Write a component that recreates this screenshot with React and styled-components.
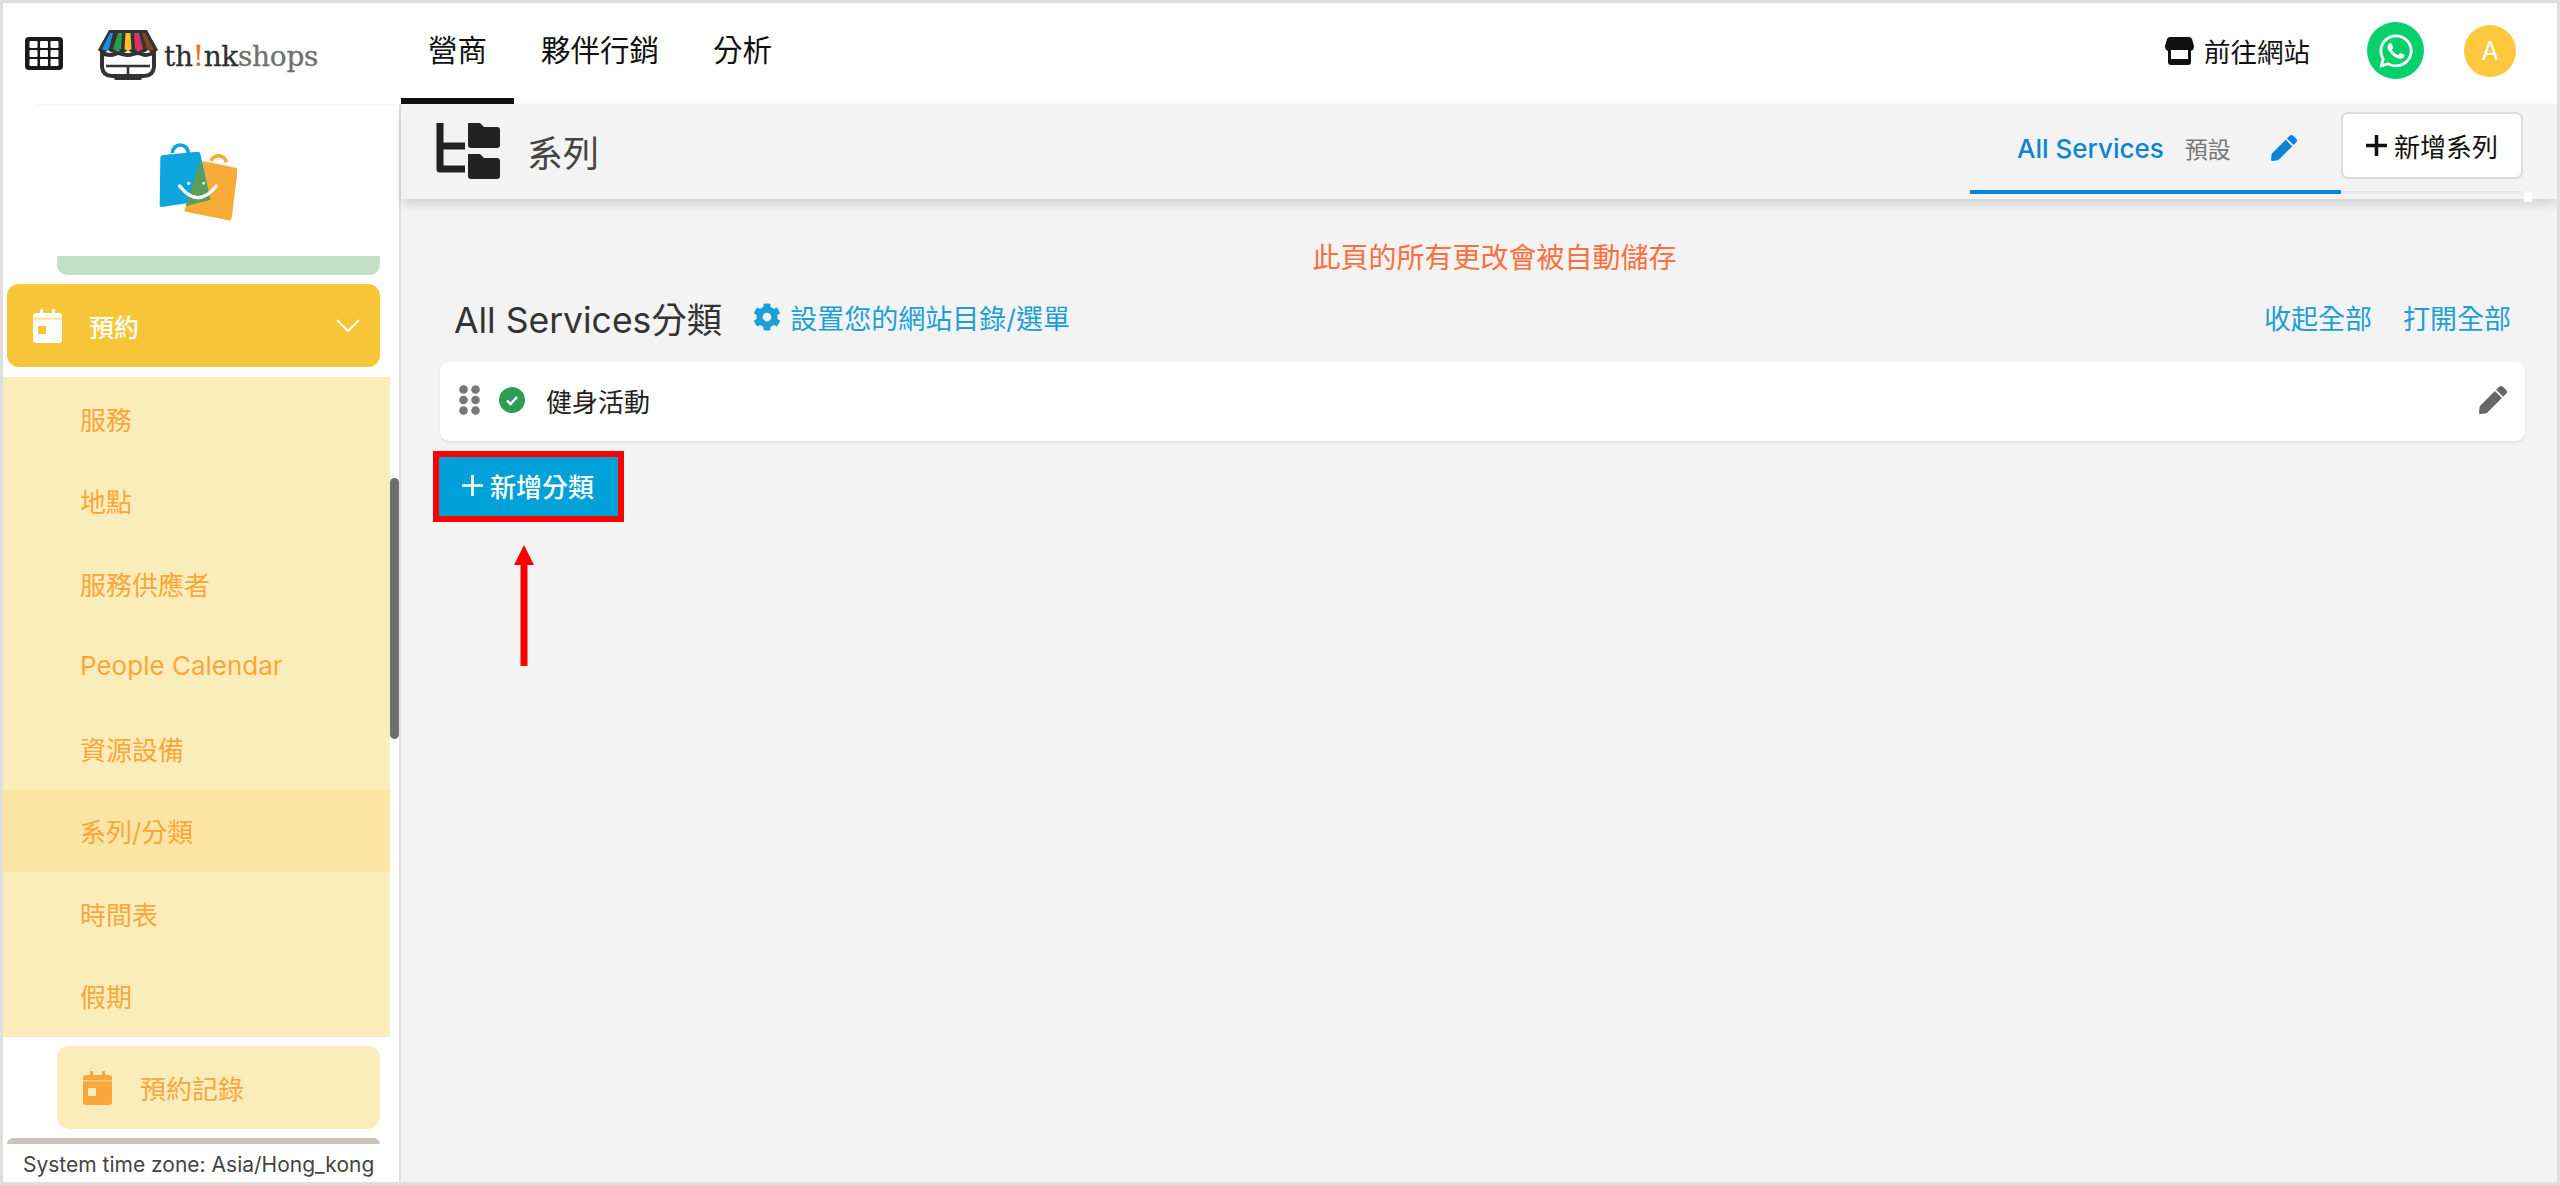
import React from 'react';
import styled, { createGlobalStyle } from 'styled-components';
import { FaCog, FaPen, FaWhatsapp } from 'react-icons/fa';

const FONT = 'Inter, "Noto Sans CJK TC", sans-serif';

const GlobalStyle = createGlobalStyle`
  html, body { margin: 0; padding: 0; background: #fff; }
  * { box-sizing: border-box; }
  body { font-family: ${FONT}; }
`;

const Frame = styled.div`
  width: 2560px;
  height: 1185px;
  border: 3px solid #dedede;
  display: flex;
  flex-direction: column;
  overflow: hidden;
  background: #fff;
`;

/* ---------- top bar ---------- */
const TopBar = styled.header`
  flex: 0 0 101px;
  display: flex;
  align-items: stretch;
  background: #fff;
  padding-left: 22px;
`;

const Brand = styled.div`
  width: 376px;
  display: flex;
  align-items: center;
  gap: 34px;
`;

const BrandMark = styled.div`
  display: flex;
  align-items: center;
`;

const LogoText = styled.span`
  font-family: "DejaVu Serif", serif;
  font-size: 28px;
  letter-spacing: -0.3px;
  color: #6f6f6f;
  margin: 6px 0 0 5px;
  -webkit-text-stroke: 0.3px currentColor;
  b { font-weight: 400; color: #2e2e2e; }
  i { font-style: normal; color: #f26b2a; }
`;

const NavTab = styled.a`
  padding: 0 27px;
  font-size: 29.5px;
  line-height: 1;
  color: #111;
  display: flex;
  align-items: center;
  border-bottom: 6px solid ${p => (p.$active ? '#111' : 'transparent')};
`;

const TopRight = styled.div`
  margin-left: auto;
  display: flex;
  align-items: center;
  padding-right: 41px;
  padding-bottom: 6px;
`;

const SiteLink = styled.a`
  display: flex;
  align-items: center;
  gap: 10px;
  font-size: 26.5px;
  color: #111;
`;

const WhatsApp = styled.span`
  width: 57px;
  height: 57px;
  border-radius: 50%;
  background: #06d06b;
  color: #fff;
  font-size: 38px;
  display: flex;
  align-items: center;
  justify-content: center;
  margin-left: 57px;
`;

const Avatar = styled.span`
  width: 52px;
  height: 52px;
  border-radius: 50%;
  background: #ffc83d;
  color: #fff;
  font-size: 25px;
  display: flex;
  align-items: center;
  justify-content: center;
  margin-left: 40px;
`;

/* ---------- body ---------- */
const Body = styled.div`
  flex: 1;
  display: flex;
  min-height: 0;
`;

const Sidebar = styled.aside`
  position: relative;
  width: 398px;
  flex: none;
  border-right: 2px solid #e0e0e0;
  display: flex;
  flex-direction: column;
  background: #fff;
  overflow: hidden;
`;

const BagBlock = styled.div`
  height: 152px;
  margin-left: 32px;
  border-top: 1px solid #f2f6f4;
  display: flex;
  justify-content: center;
  padding: 36px 40px 0 0;
`;

const GreenStub = styled.div`
  height: 19px;
  margin: 0 19px 0 54px;
  background: #c2dfc8;
  border-radius: 0 0 10px 10px;
`;

const ParentItem = styled.div`
  height: 83px;
  margin: 9px 19px 10px 4px;
  background: #f7c638;
  border-radius: 12px;
  display: flex;
  align-items: center;
  padding: 0 20px 0 26px;
  color: #fff;
  font-size: 25px;
  font-weight: 500;
  span { margin-left: 27px; flex: 1; }
`;

const SubMenu = styled.ul`
  list-style: none;
  margin: 0;
  padding: 0;
  width: 387px;
  background: #fbedb9;
`;

const SubItem = styled.li`
  height: 82.5px;
  display: flex;
  align-items: center;
  padding-left: 77px;
  font-size: 26px;
  color: #fba63a;
  background: ${p => (p.$active ? '#fce5a3' : 'transparent')};
`;

const RecordCard = styled.div`
  height: 83px;
  margin: 9px 19px 9px 54px;
  background: #fbedb9;
  border-radius: 12px;
  display: flex;
  align-items: center;
  padding-left: 26px;
  font-size: 26px;
  color: #fba63a;
  span { margin-left: 28px; }
`;

const BrownStub = styled.div`
  height: 6px;
  margin: 0 19px 0 4px;
  background: #cfc0b8;
  border-radius: 10px 10px 0 0;
  flex: none;
`;

const TimeZone = styled.div`
  padding: 8px 0 0 20px;
  font-size: 21px;
  line-height: 26px;
  color: #444;
  white-space: nowrap;
`;

const ScrollThumb = styled.div`
  position: absolute;
  left: 387px;
  top: 374px;
  width: 9px;
  height: 261px;
  border-radius: 5px;
  background: #6e6e6e;
`;

/* ---------- main ---------- */
const Main = styled.main`
  position: relative;
  flex: 1;
  background: #f3f3f3;
  display: flex;
  flex-direction: column;
`;

const SubHeader = styled.div`
  position: relative;
  height: 95px;
  flex: none;
  display: flex;
  padding: 0 34px 0 35px;
  background: #f3f3f3;
  box-shadow: 0 6px 10px rgba(0, 0, 0, 0.12);
`;

const PageTitle = styled.div`
  display: flex;
  align-items: center;
  gap: 27px;
  font-size: 36px;
  color: #444;
  height: 95px;
  padding-bottom: 2px;
`;

const TabRail = styled.div`
  margin-left: auto;
  height: 90px;
  display: flex;
  border-bottom: 3px solid #e8eaea;
`;

const SeriesTab = styled.div`
  width: 371px;
  height: 90px;
  margin-bottom: -3px;
  padding: 2px 0 0 47px;
  border-bottom: 4px solid #0d84d0;
  display: flex;
  align-items: center;
  color: #0d84d0;
  font-size: 26px;
  font-weight: 500;
  small { font-size: 23px; font-weight: 400; color: #777; margin: 0 40px 0 21px; }
`;

const OutlineButton = styled.button`
  align-self: flex-start;
  margin-top: 8px;
  width: 182px;
  height: 67px;
  border: 2px solid #ddd;
  border-radius: 7px;
  background: #fff;
  font: 26px ${FONT};
  color: #111;
  display: flex;
  align-items: center;
  justify-content: center;
  gap: 7px;
  padding: 0;
`;

const RailEnd = styled.div`
  position: absolute;
  right: 25px;
  top: 89px;
  width: 8px;
  height: 9px;
  background: #fff;
`;

const Content = styled.div`
  padding: 41px 32px 0 39px;
`;

const Notice = styled.div`
  text-align: center;
  font-size: 28px;
  line-height: 36px;
  color: #ff6f3c;
  padding-left: 24px;
`;

const HeadingRow = styled.div`
  display: flex;
  align-items: center;
  height: 44px;
  margin-top: 19px;
  margin-bottom: 4px;
  padding: 0 14px 0 14px;
`;

const Heading = styled.h2`
  margin: 0 31px 0 0;
  font-size: 35.5px;
  font-weight: 400;
  color: #333;
`;

const LinkText = styled.a`
  display: flex;
  align-items: center;
  gap: 9px;
  font-size: 27px;
  color: #1a9fd8;
  margin-left: ${p => p.$gap || 0}px;
`;

const Spacer = styled.div`
  flex: 1;
`;

const CategoryCard = styled.div`
  height: 79px;
  margin-top: 23px;
  background: #fff;
  border-radius: 9px;
  box-shadow: 0 2px 2px rgba(120, 150, 150, 0.18);
  display: flex;
  align-items: center;
  gap: 19px;
  padding: 0 18px 3px 19px;
  font-size: 26px;
  color: #222;
  span { margin-left: 2px; flex: 1; }
`;

const AddButton = styled.button`
  display: flex;
  align-items: center;
  gap: 7px;
  width: 191px;
  height: 71px;
  margin: 10px 0 0 -7px;
  padding: 0 0 3px 23px;
  border: 6px solid #f00;
  background: #00a0d9;
  color: #fff;
  font: 500 26px ${FONT};
`;

const Arrow = styled.svg`
  position: absolute;
  left: 113px;
  top: 441px;
`;

/* ---------- drawings ---------- */
const GridIcon = () => (
  <svg width="38" height="33" viewBox="0 0 38 33">
    <rect width="38" height="33" rx="4" fill="#1a1a1a" />
    {[0, 1, 2].flatMap(r =>
      [0, 1, 2].map(c => <rect key={`${r}${c}`} x={4.5 + c * 10.5} y={4 + r * 9} width="8" height="7" rx="1" fill="#fff" />)
    )}
  </svg>
);

const ShopLogo = () => (
  <svg width="62" height="52" viewBox="0 0 62 52">
    <path d="M5 24c0 0 3 3 8 3s6-2 8-2 6 2 10 2 7-2 10-2 4 2 8 2 8-3 8-3v15q-1 9-10 9H15q-9 0-10-9z" fill="#fff" stroke="#333" strokeWidth="4" />
    <path d="M9 38h44M31 39v8" stroke="#333" strokeWidth="2.5" fill="none" />
    <path d="M19 50h24" stroke="#333" strokeWidth="4" strokeLinecap="round" />
    <path d="M12 2h38l11 20q-5 5-10 0q-5 5-10 0q-5 5-10 0q-5 5-10 0q-5 5-10 0q-5 5-10 0z" fill="#333" />
    <path d="M13 5h3l-4 16q-3 3-7 0z" fill="#1b8fe0" />
    <path d="M21 5h4l-1 16q-4 3-8 0z" fill="#27a04b" />
    <path d="M28.5 5h5l1 16q-4 3-7 0z" fill="#f5c024" />
    <path d="M37 5h5l4 16q-4 3-8 0z" fill="#d5336a" />
    <path d="M45 5h3l9 16q-4 3-7 0z" fill="#7a4a1f" />
  </svg>
);

const BagLogo = () => (
  <svg width="80" height="80" viewBox="0 0 240 240">
    <path d="M46 36a24 24 0 0 1 48 0" fill="none" stroke="#0ea5df" strokeWidth="11" />
    <path d="M162 60a24 24 0 0 1 46 4" fill="none" stroke="#f8ab37" strokeWidth="11" />
    <path d="M138 60L236 80Q243 82 242 88L224 232Q222 240 214 238L86 212Q80 210 84 203z" fill="#f8ab37" />
    <path d="M18 42L122 32Q128 32 130 38L160 176L14 198Q8 198 8 192L10 50Q10 43 18 42z" fill="#0ea5df" />
    <path d="M130 58L160 176L86 196z" fill="#5c9e57" />
    <path d="M68 135Q122 205 178 135" fill="none" stroke="#fff" strokeWidth="10" strokeLinecap="round" />
    <circle cx="95" cy="127" r="5" fill="#fff" />
    <circle cx="140" cy="127" r="4" fill="#fff" />
  </svg>
);

const CalendarIcon = ({ color, hole }) => (
  <svg width="29" height="34" viewBox="0 0 29 34">
    <path d="M7 0h3v4h9V0h3v4h4q3 0 3 3v24q0 3-3 3H3q-3 0-3-3V7q0-3 3-3h4z" fill={color} />
    <rect x="0" y="9" width="29" height="1.5" fill={hole} opacity="0.6" />
    <rect x="5" y="17" width="8" height="8" fill={hole} />
  </svg>
);

const Chevron = () => (
  <svg width="24" height="13" viewBox="0 0 24 13">
    <path d="M1 1l11 11L23 1" fill="none" stroke="#fff" strokeWidth="2" />
  </svg>
);

const StoreIcon = () => (
  <svg width="29" height="28" viewBox="0 0 29 28">
    <path d="M5 0h19q2 0 3 2l2 7q0 4-3 5v11q0 3-3 3H6q-3 0-3-3V14q-3-1-3-5l2-7q1-2 3-2z" fill="#111" />
    <rect x="6" y="13" width="17" height="9" fill="#fff" />
  </svg>
);

const FolderTreeIcon = () => (
  <svg width="64" height="56" viewBox="0 0 64 56">
    <path d="M4 0v46h25M4 23h25" fill="none" stroke="#222" strokeWidth="7" strokeLinejoin="round" />
    <path d="M32 0h12l4 4h13q3 0 3 3v15q0 3-3 3H35q-3 0-3-3z" fill="#222" />
    <path d="M32 31h12l4 4h13q3 0 3 3v15q0 3-3 3H35q-3 0-3-3z" fill="#222" />
  </svg>
);

const PlusIcon = ({ size, color, weight }) => (
  <svg width={size} height={size} viewBox="0 0 20 20">
    <path d="M10 0v20M0 10h20" stroke={color} strokeWidth={weight} />
  </svg>
);

const DragDots = () => (
  <svg width="21" height="30" viewBox="0 0 21 30">
    {[0, 1, 2].flatMap(r =>
      [0, 1].map(c => <circle key={`${r}${c}`} cx={4.5 + c * 12} cy={4.5 + r * 10.5} r="4.3" fill="#777" />)
    )}
  </svg>
);

const CheckBadge = () => (
  <svg width="26" height="26" viewBox="0 0 26 26">
    <circle cx="13" cy="13" r="13" fill="#2e9e57" />
    <path d="M8 13.5l3.5 3.5L18 10" fill="none" stroke="#fff" strokeWidth="2.4" />
  </svg>
);

const SUB_ITEMS = ['服務', '地點', '服務供應者', 'People Calendar', '資源設備', '系列/分類', '時間表', '假期'];

const App = () => {
  return (
    <Frame>
      <GlobalStyle />
      <TopBar>
        <Brand>
          <GridIcon />
          <BrandMark>
            <ShopLogo />
            <LogoText>
              <b>th</b>
              <i>!</i>
              <b>nk</b>shops
            </LogoText>
          </BrandMark>
        </Brand>
        <NavTab $active>營商</NavTab>
        <NavTab>夥伴行銷</NavTab>
        <NavTab>分析</NavTab>
        <TopRight>
          <SiteLink>
            <StoreIcon />
            前往網站
          </SiteLink>
          <WhatsApp>
            <FaWhatsapp />
          </WhatsApp>
          <Avatar>A</Avatar>
        </TopRight>
      </TopBar>
      <Body>
        <Sidebar>
          <BagBlock>
            <BagLogo />
          </BagBlock>
          <GreenStub />
          <ParentItem>
            <CalendarIcon color="#fff" hole="#f7c638" />
            <span>預約</span>
            <Chevron />
          </ParentItem>
          <SubMenu>
            {SUB_ITEMS.map(item => (
              <SubItem key={item} $active={item === '系列/分類'}>
                {item}
              </SubItem>
            ))}
          </SubMenu>
          <RecordCard>
            <CalendarIcon color="#fba63a" hole="#fbedb9" />
            <span>預約記錄</span>
          </RecordCard>
          <BrownStub />
          <TimeZone>System time zone: Asia/Hong_kong</TimeZone>
          <ScrollThumb />
        </Sidebar>
        <Main>
          <SubHeader>
            <PageTitle>
              <FolderTreeIcon />
              系列
            </PageTitle>
            <TabRail>
              <SeriesTab>
                All Services
                <small>預設</small>
                <FaPen size={26} />
              </SeriesTab>
              <OutlineButton>
                <PlusIcon size={21} color="#111" weight={3.4} />
                新增系列
              </OutlineButton>
            </TabRail>
            <RailEnd />
          </SubHeader>
          <Content>
            <Notice>此頁的所有更改會被自動儲存</Notice>
            <HeadingRow>
              <Heading>All Services分類</Heading>
              <LinkText>
                <FaCog size={28} />
                設置您的網站目錄/選單
              </LinkText>
              <Spacer />
              <LinkText>收起全部</LinkText>
              <LinkText $gap={31}>打開全部</LinkText>
            </HeadingRow>
            <CategoryCard>
              <DragDots />
              <CheckBadge />
              <span>健身活動</span>
              <FaPen size={28} color="#666" />
            </CategoryCard>
            <AddButton>
              <PlusIcon size={21} color="#fff" weight={2.6} />
              新增分類
            </AddButton>
          </Content>
          <Arrow width="20" height="121" viewBox="0 0 20 121">
            <path d="M10 0l10 20h-6.5v101h-7V20H0z" fill="#f00" />
          </Arrow>
        </Main>
      </Body>
    </Frame>
  );
};

export default App;
